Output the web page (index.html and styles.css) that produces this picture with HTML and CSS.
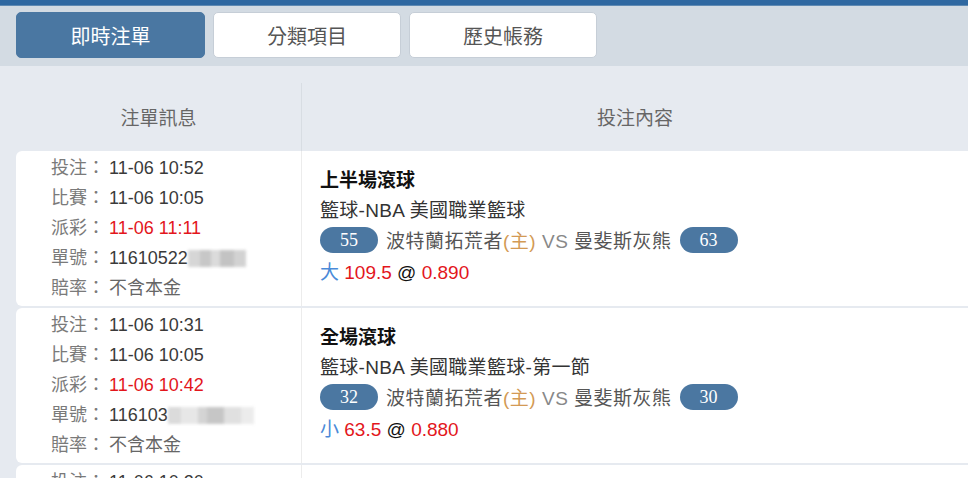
FILE: index.html
```html
<!DOCTYPE HTML>
<html>
<head>
	<meta http-equiv="Content-Type" content="text/html; charset=utf-8">
	<title>即時注單</title>
	<link rel="stylesheet" href="styles.css">
</head>
<body>
<div class="topbar"></div>
<div class="toolbar">
	<a href="#" class="tab active">即時注單</a>
	<a href="#" class="tab">分類項目</a>
	<a href="#" class="tab">歷史帳務</a>
</div>

<div class="main">
	<div class="head">
		<div class="head-info">注單訊息</div>
		<div class="head-content">投注內容</div>
	</div>

	<div class="bet">
		<div class="info">
			<div class="line"><span class="lbl">投注：</span><span class="val">11-06 10:52</span></div>
			<div class="line"><span class="lbl">比賽：</span><span class="val">11-06 10:05</span></div>
			<div class="line"><span class="lbl">派彩：</span><span class="val red">11-06 11:11</span></div>
			<div class="line"><span class="lbl">單號：</span><span class="val">11610522</span><span class="mask m1"></span></div>
			<div class="line"><span class="lbl">賠率：</span><span class="val grey">不含本金</span></div>
		</div>
		<div class="content">
			<div class="title">上半場滾球</div>
			<div class="league">籃球-NBA 美國職業籃球</div>
			<div class="match">
				<span class="score">55</span>
				<span class="teams">波特蘭拓荒者<span class="home">(主)</span> <span class="vs">VS</span> 曼斐斯灰熊</span>
				<span class="score">63</span>
			</div>
			<div class="odds"><span class="pick">大</span> <span class="red">109.5</span> @ <span class="red">0.890</span></div>
		</div>
	</div>

	<div class="bet">
		<div class="info">
			<div class="line"><span class="lbl">投注：</span><span class="val">11-06 10:31</span></div>
			<div class="line"><span class="lbl">比賽：</span><span class="val">11-06 10:05</span></div>
			<div class="line"><span class="lbl">派彩：</span><span class="val red">11-06 10:42</span></div>
			<div class="line"><span class="lbl">單號：</span><span class="val">116103</span><span class="mask m2"></span></div>
			<div class="line"><span class="lbl">賠率：</span><span class="val grey">不含本金</span></div>
		</div>
		<div class="content">
			<div class="title">全場滾球</div>
			<div class="league">籃球-NBA 美國職業籃球-第一節</div>
			<div class="match">
				<span class="score">32</span>
				<span class="teams">波特蘭拓荒者<span class="home">(主)</span> <span class="vs">VS</span> 曼斐斯灰熊</span>
				<span class="score">30</span>
			</div>
			<div class="odds"><span class="pick">小</span> <span class="red">63.5</span> @ <span class="red">0.880</span></div>
		</div>
	</div>

	<div class="bet">
		<div class="info">
			<div class="line"><span class="lbl">投注：</span><span class="val">11-06 10:20</span></div>
			<div class="line"><span class="lbl">比賽：</span><span class="val">11-06 10:05</span></div>
		</div>
		<div class="content"></div>
	</div>
</div>
</body>
</html>
```

FILE: styles.css
```css
*{
	margin: 0;
	padding: 0;
	box-sizing: border-box;
}
html, body{
	overflow: hidden;
	height: 100%;
}
body{
	background: #e6eaf0;
	font-family: "Liberation Sans", "Noto Sans CJK TC", sans-serif;
	color: #333;
}

.topbar{
	height: 6px;
	background: #2f68a1;
	border-bottom: 1px solid #5f8ab3;
}
.toolbar{
	height: 60px;
	background: #d3dbe3;
	padding: 6px 16px 0 16px;
	display: flex;
	gap: 8px;
}
.tab{
	width: 188px;
	height: 46px;
	background: #fff;
	border: 1px solid #c6ced7;
	border-radius: 5px;
	color: #555;
	font-size: 20px;
	text-decoration: none;
	display: flex;
	align-items: center;
	justify-content: center;
}
.tab.active{
	width: 189px;
	background: #4a77a2;
	border-color: #4a77a2;
	color: #fff;
}

.main{
	padding-left: 16px;
}
.head{
	display: grid;
	grid-template-columns: 286px 1fr;
	height: 85px;
	padding-top: 17px;
	font-size: 19px;
	color: #666;
}
.head-info,
.head-content{
	display: flex;
	align-items: center;
	justify-content: center;
	padding-bottom: 1px;
}
.head-info{
	border-right: 1px solid #d8dde3;
}

.bet{
	display: grid;
	grid-template-columns: 286px 1fr;
	background: #fff;
	border-radius: 6px 0 0 6px;
	margin-bottom: 2px;
	height: 155px;
}
.info{
	border-right: 1px solid #ececec;
	padding: 2px 0 0 35px;
	font-size: 18px;
}
.line{
	line-height: 30px;
	height: 30px;
	display: flex;
	align-items: center;
}
.lbl{
	color: #7a7a7a;
	width: 58px;
}
.val{
	color: #3a3a3a;
}
.grey{
	color: #666;
}
.red{
	color: #e3161c;
}
.mask{
	display: inline-block;
	height: 17px;
	filter: blur(1.5px);
	opacity: 0.75;
}
.m1{
	width: 58px;
	background: linear-gradient(90deg, #c9c9c9 0 20%, #b5b5b5 20% 40%, #cfcfcf 40% 55%, #b0b0b0 55% 80%, #c4c4c4 80%);
}
.m2{
	width: 86px;
	background: linear-gradient(90deg, #cfcfcf 0 15%, #e0e0e0 15% 35%, #c6c6c6 35% 45%, #b4b4b4 45% 65%, #d6d6d6 65% 85%, #e6e6e6 85%);
}

.content{
	padding: 15px 0 0 18px;
	font-size: 19px;
}
.title{
	line-height: 30px;
	font-weight: bold;
	color: #111;
}
.league{
	line-height: 30px;
	color: #333;
	letter-spacing: 0.3px;
}
.match{
	display: flex;
	align-items: center;
	gap: 8px;
	height: 27px;
	margin-bottom: 5px;
}
.score{
	width: 58px;
	height: 26px;
	border-radius: 13px;
	background: #4b77a1;
	color: #fff;
	font-family: "Liberation Serif", serif;
	font-size: 18px;
	line-height: 26px;
	text-align: center;
}
.teams{
	color: #555;
	letter-spacing: 0.5px;
}
.home{
	color: #d39a55;
}
.vs{
	color: #888;
}
.odds{
	line-height: 30px;
	color: #111;
}
.pick{
	color: #4a8ad8;
}
```
